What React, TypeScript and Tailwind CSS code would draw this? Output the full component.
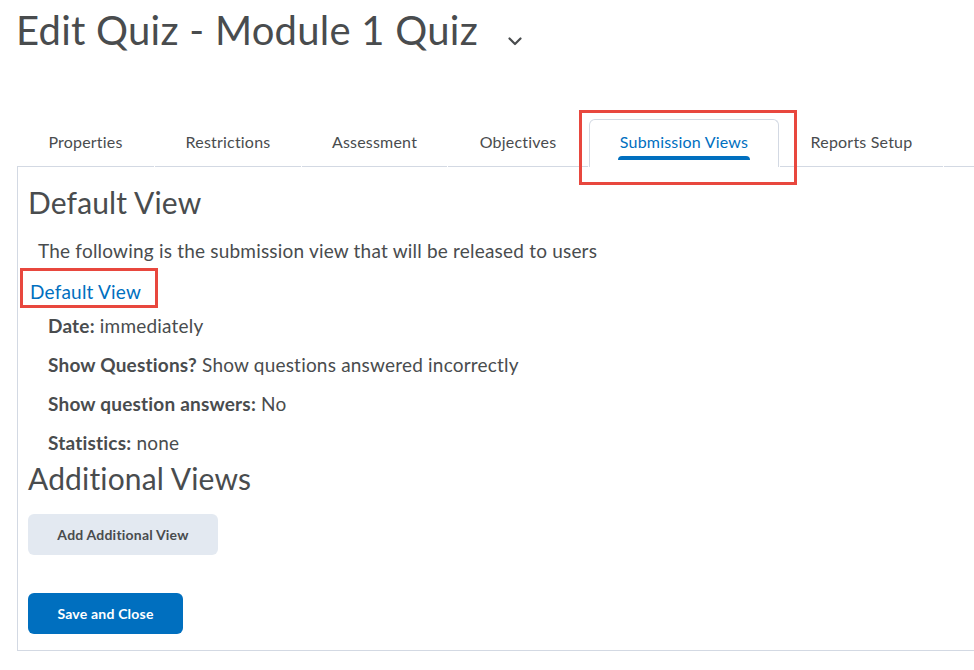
import React from 'react';

const TABS: { label: string; width: string }[] = [
  { label: 'Properties', width: 'w-[137px]' },
  { label: 'Restrictions', width: 'w-[146px]' },
  { label: 'Assessment', width: 'w-[145px]' },
  { label: 'Objectives', width: 'w-[140px]' },
  { label: 'Submission Views', width: 'w-[190px]' },
  { label: 'Reports Setup', width: 'w-[163px]' },
];
const ACTIVE_TAB = 'Submission Views';

const DETAILS: { label: string; value: string }[] = [
  { label: 'Date:', value: 'immediately' },
  { label: 'Show Questions?', value: 'Show questions answered incorrectly' },
  { label: 'Show question answers:', value: 'No' },
  { label: 'Statistics:', value: 'none' },
];

function Tab({ label, width, active }: { label: string; width: string; active: boolean }) {
  if (active) {
    return (
      <div className={`relative ml-px flex flex-col items-center rounded-t-[6px] border border-b-0 border-[#d3d9e3] bg-white pt-[11px] ${width}`}>
        <span className="text-[16px] leading-[22px] tracking-[0.2px] text-[#006fbf]">{label}</span>
        <span className="mt-[3px] h-[4px] w-[132px] rounded-t-[4px] bg-[#006fbf]" />
        {/* annotation */}
        <div className="pointer-events-none absolute -left-[11px] -top-[10px] h-[75px] w-[218px] border-[3px] border-[#e8473e]" />
      </div>
    );
  }
  return (
    <div className={`ml-px flex flex-col items-center border-b border-[#d3d9e3] pt-[12px] first:ml-0 ${width}`}>
      <span className="text-[16px] leading-[22px] tracking-[0.2px] text-[#494c4e]">{label}</span>
    </div>
  );
}

export default function App() {
  return (
    <div className="min-h-[670px] w-[974px] overflow-hidden bg-white font-['Lato',sans-serif] text-[#494c4e]">
      {/* Page title */}
      <div className="flex items-start pl-[16px] pt-[6px]">
        <h1 className="text-[40px] leading-[48px] font-normal tracking-[0.25px]">Edit Quiz - Module 1 Quiz</h1>
        <svg className="ml-[30px] mt-[31px]" width="14" height="9" viewBox="0 0 14 9" fill="none">
          <path d="M1.5 1.5 L7 7 L12.5 1.5" stroke="#494c4e" strokeWidth="2.2" strokeLinecap="round" strokeLinejoin="round" />
        </svg>
      </div>

      {/* Tabs */}
      <div className="ml-[17px] mt-[65px] flex h-[48px]">
        {TABS.map(t => (
          <Tab key={t.label} label={t.label} width={t.width} active={t.label === ACTIVE_TAB} />
        ))}
        <div className="ml-px flex-1 border-b border-[#d3d9e3]" />
      </div>

      {/* Content */}
      <div className="ml-[17px] h-[484px] border-b border-l border-[#d3d9e3] pl-[10px] pt-[17px]">
        <h2 className="text-[30px] leading-[36px] font-normal tracking-[0.15px]">Default View</h2>
        <p className="ml-[10px] mt-[20px] text-[19px] leading-[22px] tracking-[0.2px]">
          The following is the submission view that will be released to users
        </p>
        <div className="relative ml-[2px] mt-[19px] inline-block">
          <a className="text-[19px] leading-[22px] tracking-[0.2px] text-[#006fbf]">Default View</a>
          <div className="pointer-events-none absolute -left-[10px] -top-[13px] h-[40px] w-[138px] border-[3px] border-[#e8473e]" />
        </div>
        <div className="ml-[20px] mt-[10px] flex flex-col gap-[17px]">
          {DETAILS.map(d => (
            <div key={d.label} className="text-[19px] leading-[22px] tracking-[0.2px]">
              <span className="font-bold">{d.label}</span> {d.value}
            </div>
          ))}
        </div>
        <h2 className="mt-[6px] text-[30px] leading-[36px] font-normal tracking-[0.15px]">Additional Views</h2>
        <button className="mt-[18px] flex h-[41px] w-[190px] items-center justify-center rounded-[6px] bg-[#e3e9f1] text-[14px] font-bold tracking-[0.2px] text-[#494c4e]">
          Add Additional View
        </button>
        <button className="mt-[38px] flex h-[41px] w-[155px] items-center justify-center rounded-[6px] bg-[#006fbf] text-[14px] font-bold tracking-[0.2px] text-white">
          Save and Close
        </button>
      </div>
    </div>
  );
}
